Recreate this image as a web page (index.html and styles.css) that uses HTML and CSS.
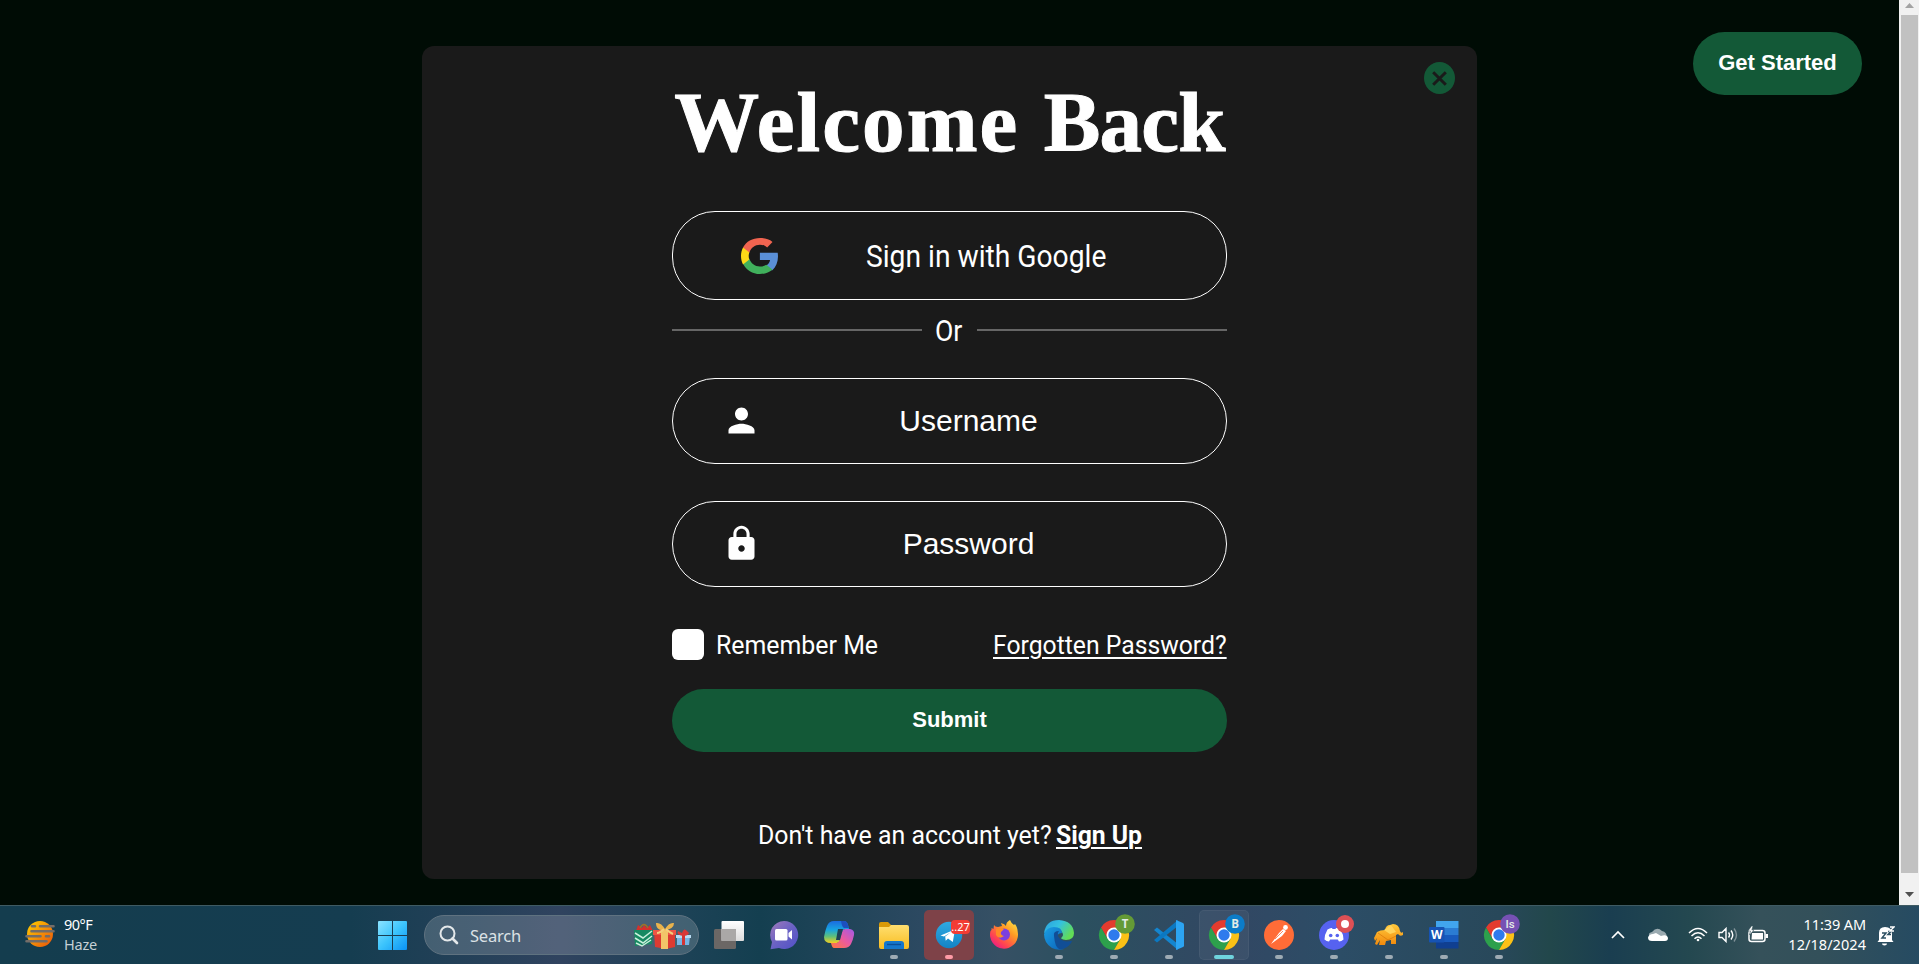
FILE: index.html
```html
<!DOCTYPE html>
<html lang="en">
<head>
<meta charset="utf-8">
<title>Welcome Back</title>
<link rel="stylesheet" href="styles.css">
</head>
<body>
<svg class="defs" width="0" height="0" aria-hidden="true">
  <defs>
    <linearGradient id="sun" x1="0" y1="0" x2="1" y2="1"><stop offset="0" stop-color="#ffd000"/><stop offset="1" stop-color="#e8500c"/></linearGradient>
    <linearGradient id="win" gradientUnits="userSpaceOnUse" x1="0" y1="0" x2="29" y2="29"><stop offset="0" stop-color="#8be3ff"/><stop offset=".5" stop-color="#3cc4fc"/><stop offset="1" stop-color="#0a92f5"/></linearGradient>
    <linearGradient id="teams" x1="0" y1="0" x2="1" y2="1"><stop offset="0" stop-color="#a07aba"/><stop offset=".5" stop-color="#6a62c4"/><stop offset="1" stop-color="#5050c8"/></linearGradient>
    <linearGradient id="copA" x1="0" y1="0" x2="0" y2="1"><stop offset="0" stop-color="#1b6be0"/><stop offset=".4" stop-color="#17a5e0"/><stop offset=".7" stop-color="#5fc07a"/><stop offset="1" stop-color="#f5d020"/></linearGradient>
    <linearGradient id="copB" x1="1" y1="0" x2="0" y2="1"><stop offset="0" stop-color="#a05ae8"/><stop offset=".5" stop-color="#ea5aa0"/><stop offset="1" stop-color="#ff7a38"/></linearGradient>
    <linearGradient id="folder" x1="0" y1="0" x2="0" y2="1"><stop offset="0" stop-color="#ffdf70"/><stop offset="1" stop-color="#f8bc20"/></linearGradient>
    <linearGradient id="tele" x1="0" y1="0" x2="0" y2="1"><stop offset="0" stop-color="#2fa9e2"/><stop offset="1" stop-color="#1383c4"/></linearGradient>
    <linearGradient id="fox" x1="1" y1="0" x2=".2" y2="1"><stop offset="0" stop-color="#fff04a"/><stop offset=".4" stop-color="#ff9a24"/><stop offset=".75" stop-color="#ff4650"/><stop offset="1" stop-color="#e8178a"/></linearGradient>
    <linearGradient id="edgeTop" x1="0" y1="0" x2="1" y2=".5"><stop offset="0" stop-color="#2a9fe0"/><stop offset=".5" stop-color="#34c1e0"/><stop offset="1" stop-color="#62dc56"/></linearGradient>
    <linearGradient id="edgeLeft" x1="0" y1="0" x2="1" y2="1"><stop offset="0" stop-color="#1ba0e4"/><stop offset="1" stop-color="#0b62b8"/></linearGradient>
    <linearGradient id="ele" x1="0" y1="0" x2="0" y2="1"><stop offset="0" stop-color="#ffc93c"/><stop offset="1" stop-color="#f28a0c"/></linearGradient>
    <linearGradient id="pane" x1="0" y1="0" x2="0" y2="1"><stop offset="0" stop-color="#ffffff"/><stop offset="1" stop-color="#dcdcdc"/></linearGradient>
  </defs>
  <symbol id="chrome" viewBox="0 0 50 50">
    <path fill="#e33b2e" d="M25 25V17.5H38A15 15 0 0 0 12 17.5L18.500 28.750Z"/>
    <path fill="#2da04c" d="M25 25 18.500 28.750 12 17.500A15 15 0 0 0 25 40L31.500 28.750Z"/>
    <path fill="#fbc116" d="M25 25 31.500 28.750 25 40A15 15 0 0 0 38 17.500H25Z"/>
    <circle cx="25" cy="25" r="7.500" fill="#fff"/><circle cx="25" cy="25" r="5.700" fill="#2f7bed"/>
  </symbol>
</svg>

<div class="browser">
  <main class="page">
    <section class="card">
      <button class="close" aria-label="Close"><svg width="15" height="15" viewBox="0 0 15 15"><path d="M1.200 1.200 13.800 13.800M13.800 1.200 1.200 13.800" stroke="#1a1a1a" stroke-width="3"/></svg></button>
      <h1 class="title"><span class="wide">Welcome</span> <span class="tight">Back</span></h1>
      <form class="form">
        <div class="google">
          <svg class="google-icon" viewBox="0 .5 23.500 23" preserveAspectRatio="none"><path fill="#5a8fd6" d="M23.490 12.270c0-.79-.07-1.540-.19-2.270H12v4.510h6.470c-.29 1.480-1.140 2.730-2.400 3.580v3h3.860c2.260-2.090 3.560-5.170 3.560-8.820z"/><path fill="#40b05c" d="M12 23.500c3.240 0 5.950-1.080 7.930-2.910l-3.860-3c-1.080.72-2.450 1.160-4.070 1.160-3.130 0-5.780-2.110-6.730-4.960H1.290v3.090C3.260 20.800 7.310 23.500 12 23.500z"/><path fill="#fdd817" d="M5.270 14.290c-.25-.72-.38-1.490-.38-2.290s.14-1.570.38-2.290V6.620H1.290C.47 8.240 0 10.060 0 12s.47 3.760 1.290 5.380z"/><path fill="#f06450" d="M12 4.750c1.770 0 3.350.61 4.600 1.800l3.420-3.420C17.950 1.190 15.240.5 12 .5 7.310.5 3.260 2.700 1.290 6.620l3.980 3.090C6.220 6.860 8.870 4.750 12 4.750z"/></svg>
          <span class="fit google-text">Sign in with Google</span>
        </div>
        <div class="divider"><i class="rule"></i><span class="fit or-text">Or</span><i class="rule"></i></div>
        <div class="field">
          <svg width="39" height="39" viewBox="0 0 24 24" fill="#fff"><path d="M12 12c2.210 0 4-1.790 4-4s-1.790-4-4-4-4 1.790-4 4 1.790 4 4 4zm0 2c-2.670 0-8 1.340-8 4v2h16v-2c0-2.660-5.330-4-8-4z"/></svg>
          <span class="field-text">Username</span>
        </div>
        <div class="field">
          <svg width="39" height="39" viewBox="0 0 24 24" fill="#fff"><path d="M18 8h-1V6c0-2.760-2.240-5-5-5S7 3.240 7 6v2H6c-1.100 0-2 .9-2 2v10c0 1.100.9 2 2 2h12c1.100 0 2-.9 2-2V10c0-1.100-.9-2-2-2zm-6 9c-1.100 0-2-.9-2-2s.9-2 2-2 2 .9 2 2-.9 2-2 2zm3.100-9H8.900V6c0-1.710 1.390-3.100 3.100-3.100s3.100 1.390 3.100 3.100v2z"/></svg>
          <span class="field-text">Password</span>
        </div>
        <div class="options">
          <i class="checkbox"></i>
          <span class="fit remember">Remember Me</span>
          <a class="fit forgot">Forgotten Password?</a>
        </div>
        <button class="submit" type="button">Submit</button>
      </form>
      <p class="signup"><span class="fit ask">Don't have an account yet?</span><a class="fit join">Sign Up</a></p>
    </section>
    <button class="get-started">Get Started</button>
  </main>
  <aside class="scrollbar">
    <svg width="20" height="15"><path d="M6 8h9l-4.500-5z" fill="#a3a3a3"/></svg>
    <i class="thumb"></i>
    <svg width="20" height="32"><path d="M6 19h9l-4.500 5z" fill="#505050"/></svg>
  </aside>
</div>

<footer class="taskbar">
  <div class="weather">
    <svg width="30" height="28" viewBox="0 0 30 28"><circle cx="15" cy="14" r="13" fill="url(#sun)"/><g stroke="#746d68" stroke-width="2.600" stroke-linecap="round"><path d="M7 6.300h3M15 6.300h13.500M6.500 11.300h22M1.500 16.300h14M21 16.300h3M1.500 21.300h20"/></g></svg>
    <div class="weather-text"><span>90°F</span><span class="dim">Haze</span></div>
  </div>
  <svg class="start" width="29" height="29" viewBox="0 0 29 29"><path fill="url(#win)" d="M0 1q0-1 1-1h13v14H0zM15 0h13q1 0 1 1v13H15zM0 15h14v14H1q-1 0-1-1zM15 15h14v13q0 1-1 1H15z"/></svg>
  <div class="search">
    <svg width="20" height="20" viewBox="0 0 20 20" fill="none" stroke="#e4e8ea" stroke-width="2"><circle cx="8.500" cy="8.500" r="7"/><path d="M13.500 13.500 18 18" stroke-width="2.600" stroke-linecap="round"/></svg>
    <span class="search-text">Search</span>
    <svg class="gifts" width="57" height="28" viewBox="0 0 57 28">
      <path d="M2 9 4 3l4 3 2-3 3 3 3-3 3 6z" fill="#d5302c"/><path d="M6 6q4-7 8 0" fill="none" stroke="#9c7428" stroke-width="1.500"/>
      <path d="M0 8h19l-1 14-17 2z" fill="#178a62"/><path d="m1 11 8 5 9-7M1 16l8 5 9-7M2 21l6 3 9-6" stroke="#c9f0dc" stroke-width="1.500" fill="none"/>
      <path d="M20 9h21v16l-9 2-11-2z" fill="#dd3b32"/><path d="M19 8h23v5H19z" fill="#ee5545"/><path d="M27 8h7v19h-7z" fill="#f2c569"/>
      <path d="M31 8C25 9 22 6 22 1q5-1 9 6 4-7 9-6 0 6-9 7z" fill="#e9b34c"/><path d="M30 7q-4 4-7 4M32 7q4 4 7 5" stroke="#f4cf7c" stroke-width="2" fill="none"/>
      <path d="M43 14h13l-1 9H43z" fill="#78b5e4"/><path d="M42 13h15v3H42z" fill="#b9dcf4"/><path d="M48 13h3v10h-3z" fill="#d43434"/><path d="M49 14q-7-1-5-5l4 2q2-6 5-2l2 2q-1 3-6 3z" fill="#d83838"/>
    </svg>
  </div>
  <nav class="apps">
    <svg class="app" viewBox="0 0 50 50"><rect x="10" y="19" width="22" height="20" rx="1.500" fill="#6b6765"/><rect x="17.500" y="11" width="22.500" height="20" rx="1" fill="url(#pane)"/><rect x="17.500" y="19" width="14.500" height="12" fill="#aaa8a7"/></svg>
    <svg class="app" viewBox="0 0 50 50"><path d="M25 11a14 14 0 1 1-5 27l-8.500 1.200L13 32A14 14 0 0 1 25 11z" fill="url(#teams)"/><rect x="16" y="19" width="12.500" height="11.500" rx="1.500" fill="#fff"/><path d="m29.500 23 3.500-3v9.500l-3.500-3z" fill="#fff"/></svg>
    <svg class="app" viewBox="0 0 50 50"><path d="M20 11h10q3 0 4 4l1 4h-4q-2 0-3 4l-2 7q-1 3-3 3h-6q-7 0-7-6 1-6 3-11 2-5 7-5z" fill="url(#copA)"/><path d="M30 11q3 0 4 4l1 3h-5q-2-1-3-7z" fill="#1c4fbe"/><path d="M30 38H20q-2 0-3-5h5q3 0 4-4l2-7q1-3 3-3h5q5 1 4 6-1 5-3 9-2 4-7 4z" fill="url(#copB)"/><path d="M24 19h5l-3 11h-4z" fill="#1d4356"/></svg>
    <svg class="app" viewBox="0 0 50 50"><path d="M10 14q0-2 2-2h7l3 3v5H10z" fill="#d99a08"/><path d="M10 17h10l2-2h16q2 0 2 2v20q0 2-2 2H12q-2 0-2-2z" fill="url(#folder)"/><path d="M15 39v-5q0-3 3-3h14q3 0 3 3v5z" fill="#1577cc"/><path d="M18 34.500h14" stroke="#0b4f98" stroke-width="1.400"/><rect class="dot" x="21" y="45" width="8" height="4" rx="2"/></svg>
    <svg class="app alert" viewBox="0 0 50 50"><circle cx="25" cy="25" r="13.200" fill="url(#tele)"/><path d="m16.500 25.500 14.500-6-2.200 12.500-4.800-3.500-2.300 2.200-.5-4.200 6-4.500-7.200 4.500z" fill="#fff"/><rect x="27" y="10" width="19" height="14" rx="4" fill="#f23c34"/><text x="36.500" y="21.200" class="badge-num">..27</text><rect x="21" y="45" width="8" height="4" rx="2" fill="#ff9ba6"/></svg>
    <svg class="app" viewBox="0 0 50 50"><path d="M15 15q1 2 4 2l4-1-1-3q4 1 5 3 0-4 4-6 1 3 4 5l1-1q3 4 3 10A14 14 0 1 1 11.500 21l1-1v-2l2 1z" fill="url(#fox)"/><circle cx="25" cy="24.500" r="6" fill="#7b3fe0"/><path d="M17 19q4-2 8 0l-3 3q-1 3 3 4-5 4-8-1z" fill="#ff8a26"/></svg>
    <svg class="app" viewBox="0 0 50 50"><path d="M10 23Q12 10 25 10q14 1 15 13 0 7-8 7-7-1-4-3 2-2 0-5-5-6-12-2-4 2-6 3z" fill="url(#edgeTop)"/><path d="M10 24q3-7 10-7 8 0 8 6-6 0-5 7 1 6 7 9-6 2-12-1-8-5-8-14z" fill="url(#edgeLeft)"/><path d="M20 26q-1-5 5-5-2 2-1 5 3 7 13 5 2-1 0 2-5 7-12 6-4-2-5-13z" fill="#114e96"/><rect class="dot" x="21" y="45" width="8" height="4" rx="2"/></svg>
    <svg class="app" viewBox="0 0 50 50"><use href="#chrome"/><circle cx="36" cy="14" r="9.800" fill="#649a36"/><text x="36" y="18" class="badge">T</text><rect class="dot" x="21" y="45" width="8" height="4" rx="2"/></svg>
    <svg class="app" viewBox="0 0 50 50"><path d="m10 20 3-2.500 21 16.500v6z" fill="#1485cf"/><path d="m10 30 3 2.500L34 16v-6z" fill="#0b78c2"/><path d="m32 10 7 3q1 .5 1 1.500v21q0 1-1 1.500l-7 3z" fill="#2ca4f2"/><rect class="dot" x="21" y="45" width="8" height="4" rx="2"/></svg>
    <svg class="app active" viewBox="0 0 50 50"><use href="#chrome"/><circle cx="36" cy="14" r="9.800" fill="#0c7cc8"/><text x="36" y="18" class="badge">B</text><rect x="15" y="45" width="20" height="4" rx="2" fill="#6fd3dd"/></svg>
    <svg class="app" viewBox="0 0 50 50"><circle cx="25" cy="25" r="15" fill="#ff6c37"/><path d="m17 34 8-11 4-4 3 2-4 5z" fill="#fff"/><circle cx="31.500" cy="17.500" r="2.400" fill="#fff"/><path d="m21 29 8-8" stroke="#ff6c37" stroke-width=".8"/><rect class="dot" x="21" y="45" width="8" height="4" rx="2"/></svg>
    <svg class="app" viewBox="0 0 50 50"><circle cx="25" cy="25" r="15" fill="#5662f0"/><path d="M18.500 19.500q3-2 4.500-1.500l.5 1h3l.5-1q1.500-.5 4.500 1.500 3 5 3 10-2 2-4.500 2l-1.200-2h-7.600l-1.200 2q-2.500 0-4.500-2 0-5 3-10z" fill="#fff"/><circle cx="21.700" cy="25.500" r="1.800" fill="#5662f0"/><circle cx="28.300" cy="25.500" r="1.800" fill="#5662f0"/><circle cx="36" cy="14" r="9" fill="#dd5055"/><circle cx="36" cy="14" r="4" fill="#fff"/><rect class="dot" x="21" y="45" width="8" height="4" rx="2"/></svg>
    <svg class="app" viewBox="0 0 50 50"><path d="M13 22q3-2 8-2 1-5 5-5l3-1q6 0 7 7 1 3 3 1v3q-3 2-5-1l-2 1v9h-5v-4l-5 1-1 4h-6l1-5-3 5-2-1 2-6-2 3-1-3z" fill="url(#ele)"/><path d="m20 20 6 4 6-2-5-7" fill="#ffd35a"/><path d="m14 23 10 7 8-4" fill="none" stroke="#d7760a" stroke-width=".7"/><rect class="dot" x="21" y="45" width="8" height="4" rx="2"/></svg>
    <svg class="app" viewBox="0 0 50 50"><path fill="#41a5ee" d="M17 11h22.500v7H17z"/><path fill="#2b7cd3" d="M17 18h22.500v7H17z"/><path fill="#185abd" d="M17 25h22.500v7H17z"/><path fill="#103f91" d="M17 32h22.500v6.500H17z"/><rect x="10" y="17" width="15.500" height="15.500" rx="1" fill="#1653b4"/><text x="17.700" y="28.800" class="word">W</text><rect class="dot" x="21" y="45" width="8" height="4" rx="2"/></svg>
    <svg class="app" viewBox="0 0 50 50"><use href="#chrome"/><circle cx="36" cy="14" r="9.800" fill="#7651b4"/><text x="36" y="18" class="badge thin">Is</text><rect class="dot" x="21" y="45" width="8" height="4" rx="2"/></svg>
  </nav>
  <div class="tray">
    <svg width="14" height="9" viewBox="0 0 14 9"><path d="m1 8 6-6 6 6" fill="none" stroke="#fff" stroke-width="1.700"/></svg>
    <svg width="20" height="14" viewBox="0 0 20 14"><path d="M2 10Q-1 5 4 4q5-6 10-1 5 1 5 7z" fill="#9aaab0"/><path d="M0 9.500Q1 6 5 6l3-1 5 3q6-2 7 2 0 3-3 3H4q-4 0-4-3.500z" fill="#fff"/></svg>
    <svg width="20" height="15" viewBox="0 0 20 15" fill="none" stroke="#fff" stroke-width="1.500"><path d="M1 6q9-9 18 0M3.500 9q6.500-6.500 13 0M6.500 11.700q3.500-3.500 7 0"/><circle cx="10" cy="13" r="1.300" fill="#fff" stroke="none"/></svg>
    <svg width="20" height="16" viewBox="0 0 20 16" fill="none" stroke="#fff" stroke-width="1.400"><path d="M1 5.500h3l4-4v13l-4-4H1zM10.500 5.500q2 2.500 0 5M13 3.500q3.500 4.500 0 9"/><path d="M16 1.500q5 6.500 0 13" stroke="#7f9097"/></svg>
    <svg width="20" height="17" viewBox="0 0 20 17"><rect x="1" y="4.500" width="16" height="11" rx="2.500" fill="none" stroke="#fff" stroke-width="1.500"/><path d="M4 7h11v6.500H3.500zM17.500 8H20v4h-2.500z" fill="#fff"/><path d="M3.500 0 0 5h2.500L1.500 9 6 4H3.800L5 0z" fill="#fff" stroke="#34505a" stroke-width=".5"/></svg>
  </div>
  <div class="clock"><span>11:39 AM</span><span class="date">12/18/2024</span></div>
  <svg class="bell" width="18" height="20" viewBox="0 0 18 20"><path d="M2 14V7q0-6 6-6 7 0 7 7v6l1.500 2h-16z" fill="#fff"/><path d="M5 17.500h5q0 2-2.500 2T5 17.500z" fill="#fff"/><path d="M5 7h4l-4 5h4M11 5.500h3l-3 3h3" fill="none" stroke="#2c4f62" stroke-width="1.500"/><path d="M13 1h4l-4 4h4" fill="none" stroke="#fff" stroke-width="1.300"/></svg>
</footer>
</body>
</html>
```
FILE: styles.css
```css
* { box-sizing: border-box; }
body { margin: 0; width: 1919px; height: 964px; overflow: hidden; background: #000c05; color: #fff; font-family: "Liberation Sans", Arial, sans-serif; display: flex; flex-direction: column; }
button { border: 0; padding: 0; font-family: inherit; color: #fff; }
svg { display: block; flex: none; }
.defs { position: absolute; }
.browser { display: flex; height: 905px; }
.page { flex: 1; display: flex; align-items: flex-start; padding-left: 422px; }
.card { position: relative; width: 1055px; height: 833px; margin-top: 46px; border-radius: 12px; background: #1a1a1a; display: flex; flex-direction: column; align-items: center; }
.close { position: absolute; top: 16px; right: 22px; width: 31px; height: 32px; border-radius: 50%; background: #135937; display: flex; align-items: center; justify-content: center; }
.title { margin: 26px 0 0; height: 100px; font: bold 85px/100px "Liberation Serif", serif; white-space: nowrap; -webkit-text-stroke: 1px #fff; }
.wide { letter-spacing: 2.1px; }
.tight { margin-left: 3px; letter-spacing: -0.8px; }
.form { width: 555px; margin-top: 39px; display: flex; flex-direction: column; }
.google { height: 89px; border: 1px solid #fff; border-radius: 43px; display: flex; align-items: center; padding-left: 68px; }
.google-icon { width: 37px; height: 36px; }
.fit { display: inline-block; white-space: nowrap; transform-origin: 0 50%; font-family: Roboto, sans-serif; }
.google-text { width: 240px; margin-left: 88px; font-size: 31px; line-height: 36px; transform: translateY(1px) scaleX(0.91); }
.divider { display: flex; align-items: center; justify-content: space-between; height: 60px; }
.rule { width: 250px; height: 2px; background: #666; }
.or-text { font-size: 30px; width: 29px; transform: scaleX(0.89); }
.field { height: 86px; border: 1px solid #fff; border-radius: 43px; display: flex; align-items: center; padding: 0 0 1px 49px; margin-top: 18px; }
.field + .field { margin-top: 37px; }
.field-text { width: 415px; text-align: center; font-size: 30px; }
.options { height: 31px; margin-top: 42px; display: flex; align-items: center; }
.checkbox { width: 32px; height: 31px; border-radius: 6px; background: #fff; }
.remember { width: 162px; margin-left: 12px; font-size: 26px; transform: scaleX(0.957); }
.forgot { width: 234px; margin-left: auto; font-size: 26px; text-decoration: underline; text-decoration-thickness: 2px; text-underline-offset: 3px; transform: scaleX(0.951); }
.submit { height: 63px; margin-top: 29px; padding-bottom: 2px; border-radius: 32px; background: #135937; font-size: 22px; font-weight: bold; }
.signup { width: 384px; margin: 67px 0 0; display: flex; font-size: 26px; line-height: 32px; }
.ask { width: 298px; transform: scaleX(0.957); }
.join { width: 86px; font-weight: bold; text-decoration: underline; text-decoration-thickness: 2px; text-underline-offset: 3px; transform: scaleX(0.95); }
.get-started { margin: 32px 0 0 216px; width: 169px; height: 63px; padding-bottom: 2px; border-radius: 32px; background: #135937; font-size: 22px; font-weight: bold; }
.scrollbar { width: 20px; background: #f1f1f1; display: flex; flex-direction: column; }
.thumb { flex: 1; margin: 0 1px 0 2px; background: #c1c1c1; }

.taskbar { height: 59px; border-top: 1px solid #3f5b63; display: flex; padding-left: 25px; font-family: "Noto Sans", "Open Sans", sans-serif;
  background: linear-gradient(90deg, #143d4e 0, #153d50 350px, #30435f 560px, #1c4256 690px, #143f50 760px, #2c4961 920px, #365064 1000px, #2b505f 1080px, #324763 1230px, #2c4d66 1340px, #28485a 1500px, #22474b 1550px, #1a3e50 1610px, #244850 1690px, #35515a 1760px, #33505a 1820px, #264b62 1919px); }
.weather { width: 353px; display: flex; padding-top: 14px; }
.weather-text { margin: -6px 0 0 9px; display: flex; flex-direction: column; font-size: 14.5px; line-height: 20px; letter-spacing: -0.5px; }
.dim { color: #c6d0d5; letter-spacing: -0.2px; }
.start { margin-top: 15px; }
.search { margin: 9px 0 0 17px; width: 275px; height: 40px; border: 1px solid #5f7280; border-radius: 20px; background: rgba(255, 255, 255, 0.17); display: flex; align-items: center; padding-left: 14px; }
.search-text { margin-left: 11px; font-size: 16.5px; color: #dbe1e5; letter-spacing: -0.2px; }
.gifts { margin: 2px 7px 0 auto; }
.apps { display: flex; gap: 5px; margin: 4px 0 0 5px; }
.app { width: 50px; height: 50px; border-radius: 5px; overflow: visible; }
.alert { background: #7e4248; }
.active { background: rgba(255, 255, 255, 0.05); box-shadow: inset 0 0 0 1px rgba(255, 255, 255, 0.05); }
.dot { fill: #9eabb4; }
.badge { fill: #e3ebe6; font: bold 11.5px "Open Sans", sans-serif; text-anchor: middle; }
.thin { font-family: Roboto, sans-serif; font-weight: 500; }
.badge-num { fill: #fff; font: 11px "Noto Sans", sans-serif; text-anchor: middle; }
.word { fill: #fff; font: bold 12px "Open Sans", sans-serif; text-anchor: middle; }
.tray { display: grid; grid-template-columns: 37px 40px 30px 30px 20px; margin-left: 87px; height: 58px; padding-bottom: 1px; align-items: center; }
.clock { margin: 8px 0 0 13px; width: 85px; display: flex; flex-direction: column; text-align: right; font-size: 14.5px; line-height: 20px; letter-spacing: -0.1px; }
.date { letter-spacing: 0.05px; }
.bell { margin: 20px 0 0 11px; }
```
